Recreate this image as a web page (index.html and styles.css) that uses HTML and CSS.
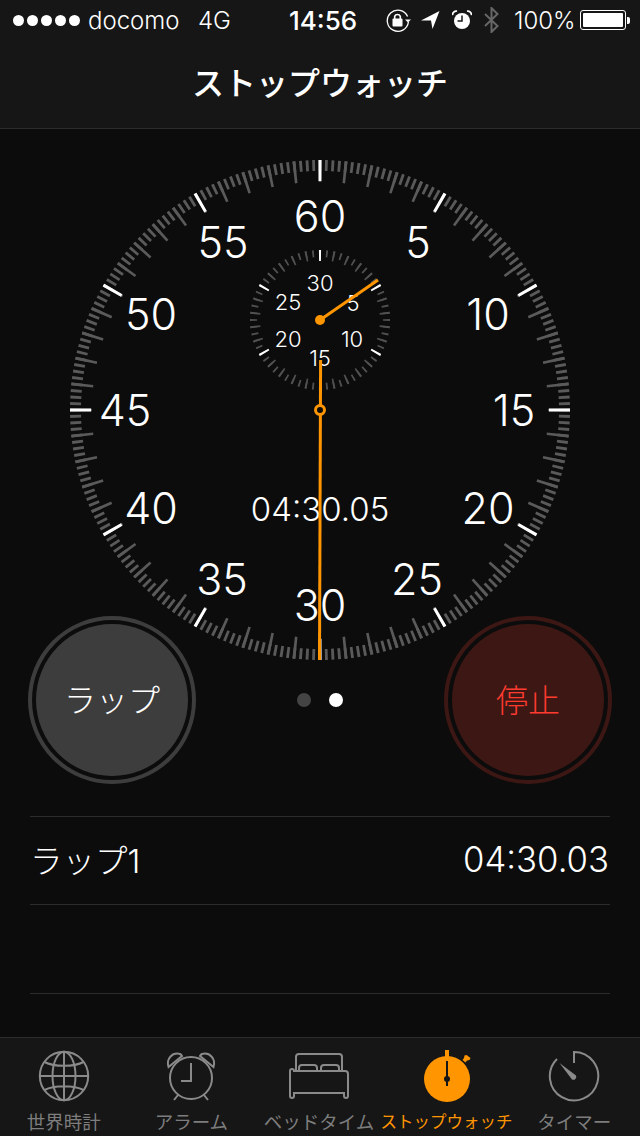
FILE: index.html
```html
<!DOCTYPE html>
<html lang="ja">
<head>
<meta charset="utf-8">
<title>ストップウォッチ</title>
<link rel="stylesheet" href="styles.css">
</head>
<body>
<div class="phone">
	<div class="top_bar">
		<div class="status">
			<div class="signal"><i></i><i></i><i></i><i></i><i></i></div>
			<span class="carrier">docomo</span>
			<span class="net">4G</span>
			<span class="clock">14:56</span>
			<svg class="st_lock" width="26" height="26" viewBox="0 0 26 26">
				<path d="M22.6 9.5A10.6 10.6 0 1 0 23.4 15" fill="none" stroke="#fff" stroke-width="1.3"/>
				<path d="M20 12.5h6l-3 3z" fill="#fff"/>
				<rect x="7.5" y="11.5" width="10" height="8" rx="1" fill="#fff"/>
				<path d="M9.7 12V9.4a3 3 0 0 1 5.6 0V12" fill="none" stroke="#fff" stroke-width="1.6"/>
			</svg>
			<svg class="st_loc" width="19" height="18" viewBox="0 0 19 18"><path d="M0 9.5 18.5 0 11.5 18 10 9.5z" fill="#fff"/></svg>
			<svg class="st_alarm" width="20" height="20" viewBox="0 0 20 20">
				<circle cx="10" cy="11" r="8" fill="#fff"/>
				<path d="M10 5.5V11H5.5" fill="none" stroke="#161616" stroke-width="1.5"/>
				<path d="M.6 5.2A3.6 3.6 0 0 1 5 1.2M19.4 5.2A3.6 3.6 0 0 0 15 1.2" fill="none" stroke="#fff" stroke-width="1.7"/>
			</svg>
			<svg class="st_bt" width="15" height="26" viewBox="0 0 15 26"><path d="M1 7 13.5 19 7.5 25V1l6 6L1 19" fill="none" stroke="#666" stroke-width="2"/></svg>
			<span class="percent">100%</span>
			<div class="battery"><div class="battery_fill"></div></div>
			<div class="battery_nub"></div>
		</div>
		<div class="nav_title">ストップウォッチ</div>
	</div>

	<div class="main">
		<svg class="dial" width="500" height="500" viewBox="-250 -250 500 500">
			<g transform="rotate(-90)" fill="none">
				<circle class="tick_grey" r="244.5" stroke-width="11" pathLength="240" stroke-dasharray=".44 .56" stroke-dashoffset=".22"/>
				<circle class="tick_grey" r="239" stroke-width="22" pathLength="60" stroke-dasharray=".11 .89" stroke-dashoffset=".055"/>
				<circle class="tick_white" r="239.5" stroke-width="21" pathLength="12" stroke-dasharray=".024 .976" stroke-dashoffset=".012"/>
			</g>
			<g class="num_big" text-anchor="middle">
				<text x="0" y="-178">60</text>
				<text x="98" y="-152">5</text>
				<text x="168" y="-80">10</text>
				<text x="194" y="16">15</text>
				<text x="168" y="114">20</text>
				<text x="97" y="185">25</text>
				<text x="0" y="211">30</text>
				<text x="-98" y="185">35</text>
				<text x="-169" y="114">40</text>
				<text x="-195" y="16">45</text>
				<text x="-169" y="-80">50</text>
				<text x="-97" y="-152">55</text>
			</g>
			<g transform="translate(0 -90)">
				<g transform="rotate(-90)" fill="none">
					<circle class="tick_sub" r="66.5" stroke-width="7" pathLength="60" stroke-dasharray=".26 .74" stroke-dashoffset=".13"/>
					<circle class="tick_sub" r="65" stroke-width="10" pathLength="30" stroke-dasharray=".13 .87" stroke-dashoffset=".065"/>
					<circle class="tick_white" r="64.5" stroke-width="11" pathLength="6" stroke-dasharray=".03 .97" stroke-dashoffset=".015"/>
				</g>
				<g class="num_small" text-anchor="middle">
					<text x="0" y="-29">30</text>
					<text x="33" y="-9">5</text>
					<text x="32" y="27">10</text>
					<text x="0" y="46">15</text>
					<text x="-32" y="27">20</text>
					<text x="-32" y="-10">25</text>
				</g>
				<line class="hand" x1="0" y1="0" x2="58" y2="-40" stroke-width="3"/>
				<circle class="hand_dot" r="5"/>
			</g>
			<text class="num_time" x="0" y="111" text-anchor="middle">04:30.05</text>
			<line class="hand" x1="0.6" y1="-50" x2="-0.5" y2="250" stroke-width="3"/>
			<circle class="hand_hub" r="4.5" stroke-width="3"/>
		</svg>

		<div class="controls">
			<div class="round_btn btn_lap"><span>ラップ</span></div>
			<div class="pager"><i class="dot"></i><i class="dot dot_on"></i></div>
			<div class="round_btn btn_stop"><span>停止</span></div>
		</div>

		<div class="laps">
			<div class="lap_row"><span>ラップ1</span><span class="lap_time">04:30.03</span></div>
			<div class="lap_row"></div>
		</div>
	</div>

	<div class="tabbar">
		<div class="tab">
			<svg width="52" height="52" viewBox="0 0 52 52" fill="none" stroke="#8a8a8a" stroke-width="2">
				<circle cx="26" cy="26" r="24.2"/>
				<ellipse cx="26" cy="26" rx="11.5" ry="24.2"/>
				<path d="M26 2v48M2 26h48M6.5 12C16 17 36 17 45.5 12M6.5 40C16 35 36 35 45.5 40"/>
			</svg>
			<span>世界時計</span>
		</div>
		<div class="tab">
			<svg width="52" height="52" viewBox="0 0 52 52" fill="none" stroke="#8a8a8a" stroke-width="2">
				<circle cx="26" cy="28" r="21"/>
				<path d="M26 13V31H16M13 45l-4 5M39 45l4 5"/>
				<path d="M3.5 17C1 9 7 2 15 4c1 .5 1.5 1 2 2zM48.500 17C51 9 45 2 37 4c-1 .5-1.500 1-2 2z"/>
			</svg>
			<span>アラーム</span>
		</div>
		<div class="tab">
			<svg width="62" height="52" viewBox="0 0 62 52" fill="none" stroke="#8a8a8a" stroke-width="2">
				<path d="M8 21V7q0-3 3-3h40q3 0 3 3v14"/>
				<path d="M11 21v-3q0-3 3-3h12q3 0 3 3v3M33 21v-3q0-3 3-3h12q3 0 3 3v3"/>
				<path d="M5 21h52q3 0 3 3v22q0 2-2 2t-2-2v-3H6v3q0 2-2 2t-2-2V21q0-2 2-2t2 2"/>
			</svg>
			<span>ベッドタイム</span>
		</div>
		<div class="tab tab_on">
			<svg width="52" height="52" viewBox="0 0 52 52">
				<circle cx="26" cy="29" r="23" fill="#ff9500"/>
				<rect x="24" y="0" width="4" height="8" fill="#ff9500"/>
				<path d="M41.5 10l1.500-2 .5-2.500 2-.5 4 3-1 2-2.500 .5-1.500 2z" fill="#ff9500"/>
				<path d="M26 11V36" stroke="#161616" stroke-width="2"/>
				<circle cx="26" cy="29" r="3" fill="#161616"/>
			</svg>
			<span>ストップウォッチ</span>
		</div>
		<div class="tab">
			<svg width="52" height="52" viewBox="0 0 52 52" fill="none" stroke="#8a8a8a" stroke-width="2">
				<path d="M26 13V2A24.2 24.2 0 1 1 9 9"/>
				<path d="M11.5 13 28 25.5a3 3 0 0 1-4 4z" fill="#8a8a8a" stroke="none"/>
			</svg>
			<span>タイマー</span>
		</div>
	</div>
</div>
</body>
</html>
```

FILE: styles.css
```css
* {
	box-sizing: border-box;
}

body {
	margin: 0;
	padding: 0;
	background: #0c0c0c;
	font-family: Inter, "Noto Sans CJK JP", sans-serif;
	color: #fff;
}

.phone {
	display: flex;
	flex-direction: column;
	width: 640px;
	height: 1136px;
	overflow: hidden;
}

/* top */
.top_bar {
	height: 129px;
	flex: none;
	background: #161616;
	border-bottom: 1px solid #2c2c2c;
}

.status {
	display: flex;
	align-items: center;
	height: 40px;
	padding-left: 13px;
	font-size: 24px;
	font-weight: 300;
}

.signal {
	display: flex;
	gap: 3px;
	width: 75px;
}

.signal i {
	width: 11px;
	height: 11px;
	border-radius: 50%;
	background: #fff;
}

.carrier {
	width: 110px;
}

.net {
	width: 91px;
}

.clock {
	width: 96px;
	font-size: 26px;
	font-weight: 500;
}

.st_lock {
	margin-right: 10px;
}

.st_loc {
	margin-right: 12px;
}

.st_alarm {
	margin-right: 12px;
}

.st_bt {
	margin-right: 15px;
}

.percent {
	width: 66px;
}

.battery {
	width: 46px;
	height: 20px;
	padding: 2px;
	border: 1px solid #fff;
	border-radius: 3px;
}

.battery_fill {
	height: 100%;
	background: #fff;
	border-radius: 1px;
}

.battery_nub {
	width: 3px;
	height: 7px;
	margin-left: 1px;
	background: #fff;
	border-radius: 0 2px 2px 0;
}

.nav_title {
	height: 88px;
	line-height: 88px;
	text-align: center;
	font-size: 32px;
	font-weight: 500;
}

/* stopwatch */
.main {
	flex: 1;
	padding-top: 31px;
}

.dial {
	display: block;
	margin: 0 auto;
}

.tick_grey {
	stroke: #5a5a5a;
}

.tick_sub {
	stroke: #505050;
}

.tick_white {
	stroke: #fff;
}

.num_big {
	fill: #fff;
	font-size: 43px;
	font-weight: 300;
}

.num_small {
	fill: #fff;
	font-size: 22px;
	font-weight: 300;
}

.num_time {
	fill: #fff;
	font-size: 33px;
	font-weight: 300;
}

.hand {
	stroke: #ff9500;
}

.hand_dot {
	fill: #ff9500;
}

.hand_hub {
	fill: #0c0c0c;
	stroke: #ff9500;
}

.controls {
	display: flex;
	justify-content: space-between;
	align-items: center;
	margin-top: -44px;
	padding: 0 28px;
}

.round_btn {
	display: flex;
	align-items: center;
	justify-content: center;
	width: 168px;
	height: 168px;
	border: 4px solid;
	border-radius: 50%;
	padding: 4px;
	background-clip: content-box;
	font-size: 32px;
	font-weight: 300;
}

.round_btn span {
	margin-bottom: 5px;
}

.btn_lap {
	background-color: #3d3d3d;
	border-color: #3d3d3d;
	color: #fff;
}

.btn_stop {
	background-color: #3d1714;
	border-color: #3d1714;
	color: #ff3b30;
}

.pager {
	display: flex;
	gap: 18px;
}

.dot {
	width: 14px;
	height: 14px;
	border-radius: 50%;
	background: #444;
}

.dot_on {
	background: #fff;
}

.laps {
	margin: 32px 30px 0;
	border-top: 1px solid #2c2c2c;
}

.lap_row {
	display: flex;
	justify-content: space-between;
	align-items: center;
	height: 88.4px;
	border-bottom: 1px solid #2c2c2c;
	padding: 0 1px 4px 0;
	font-size: 32.5px;
	font-weight: 300;
}

.lap_time {
	font-size: 34.7px;
}

/* tabs */
.tabbar {
	display: flex;
	flex: none;
	height: 99px;
	padding-right: 2px;
	background: #161616;
	border-top: 1px solid #2c2c2c;
}

.tab {
	display: flex;
	flex: 1;
	flex-direction: column;
	align-items: center;
	min-width: 0;
	padding-top: 12px;
	color: #7d7d7d;
	font-size: 18.5px;
	line-height: 24px;
	white-space: nowrap;
}

.tab svg {
	flex: none;
	margin-bottom: 8px;
}

.tab_on {
	color: #ff9500;
	font-size: 16.5px;
}
```
